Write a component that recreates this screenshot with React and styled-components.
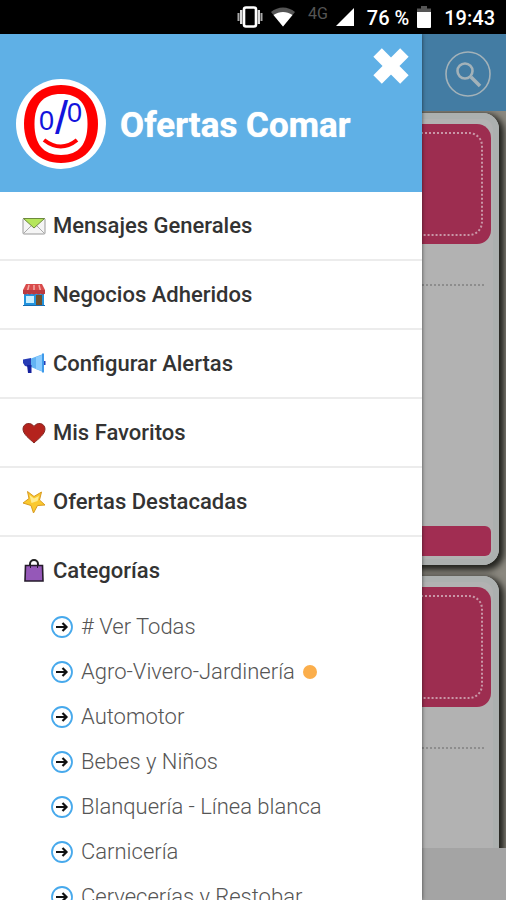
import React, { useState } from 'react';
import styled, { createGlobalStyle } from 'styled-components';

const categories = [
    { name: "# Ver Todas" },
    { name: "Agro-Vivero-Jardinería", isNew: true },
    { name: "Automotor" },
    { name: "Bebes y Niños" },
    { name: "Blanquería - Línea blanca" },
    { name: "Carnicería" },
    { name: "Cervecerías y Restobar" },
];

const VibrateIcon = () => (
    <svg width="26" height="22" viewBox="0 0 26 22" fill="none">
        <rect x="7" y="1.5" width="12" height="19" rx="2" stroke="#fff" strokeWidth="2.6" />
        <path d="M4.2 4v14M21.8 4v14" stroke="#ddd" strokeWidth="2.400" />
        <path d="M1.5 7v8M24.5 7v8" stroke="#aaa" strokeWidth="2" />
    </svg>
);

const WifiIcon = () => (
    <svg width="24" height="20" viewBox="0 0 24 20">
        <path d="M12 19.5L0 5C7 -1 17 -1 24 5z" fill="#555" />
        <path d="M12 19.5L2.500 8C8.500 4 15.500 4 21.500 8z" fill="#fff" />
    </svg>
);

const SignalIcon = () => (
    <svg width="18" height="18" viewBox="0 0 18 18">
        <path d="M0 18L18 0v18z" fill="#fff" />
    </svg>
);

const BatteryIcon = () => (
    <svg width="14" height="22" viewBox="0 0 14 22">
        <path d="M0 2.500h4V0h6v2.500h4V7H0z" fill="#555" />
        <path d="M0 6h14v15a1 1 0 0 1-1 1H1a1 1 0 0 1-1-1z" fill="#fff" />
    </svg>
);

const SearchIcon = () => (
    <svg width="46" height="46" viewBox="0 0 46 46" fill="none" stroke="#a3b2b9">
        <circle cx="23" cy="23" r="22" strokeWidth="1.600" />
        <circle cx="20" cy="20" r="7.500" strokeWidth="2.600" />
        <path d="M26 26l9 9" strokeWidth="3.600" />
    </svg>
);

const CloseIcon = () => (
    <svg width="36" height="36" viewBox="0 0 36 36" stroke="#fff" strokeWidth="12">
        <path d="M4.600 4.600l26.800 26.800M31.400 4.600l-26.800 26.800" />
    </svg>
);

const Logo = () => (
    <svg width="90" height="90" viewBox="0 0 90 90" role="img" aria-label="Comar">
        <circle cx="45" cy="45" r="45" fill="#fff" />
        <path
            d="M45 6C67 6 82 21 82 45S67 84 45 84 8 69 8 45 23 6 45 6z"
            fill="#f00"
        />
        <path
            d="M45 15C63 15 71.500 25 71.500 45S63 76 45 76 18.500 65 18.500 45 27 15 45 15z"
            fill="#fff"
        />
        <LogoText x="23" y="51" fontSize="27">0</LogoText>
        <LogoText x="39" y="55" fontSize="47">/</LogoText>
        <LogoText x="51" y="43" fontSize="27">0</LogoText>
        <path d="M28 61Q45 74 61 61" fill="none" stroke="#f00" strokeWidth="4" />
    </svg>
);

const MailIcon = () => (
    <svg width="24" height="24" viewBox="0 0 24 24">
        <rect x="1" y="4.500" width="22" height="15.500" rx="1" fill="#f5f5f5" stroke="#999" />
        <path d="M1.500 19.500l8-8M22.500 19.500l-8-8" stroke="#aaa" />
        <path d="M1.500 4.500h21L12 14z" fill="#b5e65b" stroke="#6d8a3c" />
    </svg>
);

const StoreIcon = () => (
    <svg width="24" height="24" viewBox="0 0 24 24">
        <rect x="2" y="9" width="20" height="14" fill="#2293dd" />
        <path d="M4 1h16l3 6v4H1V7z" fill="#d94b4b" />
        <path d="M7 2L5 10M12 2v8M17 2l2 8" stroke="#f5a9a5" strokeWidth="1.500" />
        <path d="M1 10q2 3 4.400 0 2.200 3 4.400 0 2.200 3 4.400 0 2.200 3 4.400 0 2.200 3 4.400 0V7H1z" fill="#b83a40" />
        <rect x="4" y="13" width="8" height="7" fill="#c9f0ff" />
        <rect x="14" y="12" width="6" height="11" fill="#70502c" />
        <path d="M1 22.500h22" stroke="#176bb0" />
    </svg>
);

const MegaphoneIcon = () => (
    <svg width="24" height="24" viewBox="0 0 24 24">
        <path d="M9 6.500L21 2v18L9 15z" fill="#62b3f3" />
        <path d="M14 5l6-2v16l-6-2z" fill="#8accff" />
        <path d="M21 1.500v19" stroke="#3f9aea" strokeWidth="2" />
        <path d="M1 7.500L9 6v9.500L3 14 1 11z" fill="#263bb5" />
        <path d="M5 13h4.500v8H6z" fill="#15209d" />
        <path d="M22 9h1.500v4H22z" fill="#263bb5" />
    </svg>
);

const HeartIcon = () => (
    <svg width="24" height="24" viewBox="0 0 24 24">
        <path
            d="M12 22C8 18 1 13.500 1 8c0-6 8-7.500 11-2.500C15 .500 23 2 23 8c0 5.500-7 10-11 14z"
            fill="#b4231d"
            stroke="#842b26"
        />
    </svg>
);

const StarIcon = () => (
    <svg width="24" height="24" viewBox="0 0 24 24">
        <path
            d="M5.500 1.500l6.500 5L19.500 2 17.500 10l5.500 5-7.500.500L11.500 23 9 15.500 1 13l6-4.500z"
            fill="#fbc92f"
            stroke="#d99b20"
            strokeLinejoin="round"
        />
        <path d="M7.500 5l4.500 3.500L17 6l-1.500 5-6 2z" fill="#ffec91" />
    </svg>
);

const BagIcon = () => (
    <svg width="24" height="24" viewBox="0 0 24 24">
        <path d="M8 8V5a4 4 0 0 1 8 0v3" fill="none" stroke="#222" strokeWidth="2" />
        <path d="M3.500 6.500h17l.500 15.500H3z" fill="#9558b8" stroke="#251b2b" strokeWidth="1.600" />
        <path d="M8.500 6V9M15.500 6v3" stroke="#251b2b" />
    </svg>
);

const ArrowIcon = () => (
    <svg width="22" height="22" viewBox="0 0 22 22" fill="none">
        <circle cx="11" cy="11" r="10" stroke="#47a9ec" strokeWidth="1.800" />
        <path d="M5 11h10M11.500 7l4 4-4 4" stroke="#111" strokeWidth="2.200" />
    </svg>
);

const menu = [
    { name: "Mensajes Generales", Icon: MailIcon },
    { name: "Negocios Adheridos", Icon: StoreIcon },
    { name: "Configurar Alertas", Icon: MegaphoneIcon },
    { name: "Mis Favoritos", Icon: HeartIcon },
    { name: "Ofertas Destacadas", Icon: StarIcon },
];

const OfferCard = () => (
    <Card>
        <Coupon>
            <CouponStitch />
        </Coupon>
        <CardDivider />
        <CardBody />
        <CardFooter />
    </Card>
);

const App = () => {
    const [menuOpen, setMenuOpen] = useState(true);
    const [showCategories, setShowCategories] = useState(true);

    const onClose = () => setMenuOpen(false);
    const onToggleCategories = () => setShowCategories((prev) => !prev);

    return (
        <>
            <GlobalStyle />
            <Screen>
                <StatusBar>
                    <VibrateIcon />
                    <WifiIcon />
                    <Network>4G</Network>
                    <SignalIcon />
                    <StatusText>76 %</StatusText>
                    <BatteryIcon />
                    <StatusText>19:43</StatusText>
                </StatusBar>
                <Content>
                    <TopBar>
                        <IconButton type="button" aria-label="Buscar">
                            <SearchIcon />
                        </IconButton>
                    </TopBar>
                    <Offers>
                        <OfferCard />
                        <OfferCard />
                    </Offers>
                    <BottomBar />
                    {menuOpen &&
                        <Drawer>
                            <DrawerHeader>
                                <Logo />
                                <Title>Ofertas Comar</Title>
                                <CloseButton type="button" aria-label="Cerrar" onClick={onClose}>
                                    <CloseIcon />
                                </CloseButton>
                            </DrawerHeader>
                            <nav>
                                {menu.map(({ name, Icon }) => (
                                    <MenuLink key={name} href="#">
                                        <Icon />
                                        {name}
                                    </MenuLink>
                                ))}
                                <MenuToggle
                                    type="button"
                                    aria-expanded={showCategories}
                                    onClick={onToggleCategories}
                                >
                                    <BagIcon />
                                    Categorías
                                </MenuToggle>
                                {showCategories &&
                                    <CategoryList>
                                        {categories.map(({ name, isNew }) => (
                                            <li key={name}>
                                                <CategoryLink href="#">
                                                    <ArrowIcon />
                                                    {name}
                                                    {isNew && <Dot />}
                                                </CategoryLink>
                                            </li>
                                        ))}
                                    </CategoryList>
                                }
                            </nav>
                        </Drawer>
                    }
                </Content>
            </Screen>
        </>
    );
}

export default App;

const GlobalStyle = createGlobalStyle`
* {
    box-sizing: border-box;
}
body {
    margin: 0;
    font-family: Roboto, "Liberation Sans", sans-serif;
}
svg {
    display: block;
    flex-shrink: 0;
}
`;

const Screen = styled.div`
display: flex;
flex-direction: column;
height: 100vh;
overflow: hidden;
`;

const StatusBar = styled.div`
display: flex;
align-items: center;
justify-content: flex-end;
gap: 8px;
height: 34px;
flex-shrink: 0;
padding: 0 11px;
background-color: #000;
color: #fff;
`;

const StatusText = styled.span`
font-size: 20px;
font-weight: 500;
white-space: nowrap;
padding: 2px 0 0 5px;
`;

const Network = styled.span`
align-self: flex-start;
padding: 4px 0 0 5px;
font-size: 16px;
line-height: 20px;
color: #555;
`;

const Content = styled.main`
position: relative;
display: flex;
flex-direction: column;
flex: 1;
min-height: 0;
`;

const TopBar = styled.header`
display: flex;
align-items: center;
justify-content: flex-end;
height: 77px;
flex-shrink: 0;
padding: 2px 15px 0;
background-color: #437ca3;
`;

const IconButton = styled.button`
padding: 0;
border: none;
background: none;
cursor: pointer;
`;

const Offers = styled.section`
flex: 1;
min-height: 0;
overflow: hidden;
padding: 2px 7px;
background-color: #8b887f;
`;

const Card = styled.article`
margin-bottom: 11px;
padding: 11px 8px 9px;
border-radius: 16px;
background-color: #b2b2b2;
box-shadow: 3px 3px 6px 2px #22221e, inset 0 0 0 6px #acb0af;
`;

const Coupon = styled.div`
height: 120px;
padding: 8px;
border-radius: 14px;
background-color: #9d2d50;
`;

const CouponStitch = styled.div`
height: 100%;
border: 2px dotted #c997a7;
border-radius: 14px;
`;

const CardDivider = styled.div`
margin: 40px 7px 0;
border-top: 2px dotted #8d8d8d;
`;

const CardBody = styled.div`
min-height: 240px;
`;

const CardFooter = styled.div`
height: 30px;
border-radius: 6px;
background-color: #a12d52;
`;

const BottomBar = styled.footer`
height: 52px;
flex-shrink: 0;
background-color: #a4a4a4;
`;

const Drawer = styled.aside`
position: absolute;
top: 0;
bottom: 0;
left: 0;
width: calc(100% - 84px);
overflow: hidden;
background-color: #fff;
box-shadow: 0 0 4px rgba(0, 0, 0, 0.6);
`;

const DrawerHeader = styled.div`
position: relative;
display: flex;
align-items: center;
gap: 14px;
height: 158px;
padding: 22px 16px 0;
background-color: #5fb0e6;
`;

const Title = styled.h1`
margin: 0;
padding-top: 2px;
font-size: 35px;
font-weight: 700;
color: #fff;
text-shadow: 0 0 1px #fff;
white-space: nowrap;
`;

const CloseButton = styled(IconButton)`
position: absolute;
top: 14px;
right: 13px;
`;

const MenuLink = styled.a`
display: flex;
align-items: center;
gap: 7px;
width: 100%;
height: 69px;
padding: 0 22px;
border-bottom: 2px solid #ececec;
font-size: 22px;
font-weight: 500;
color: #333;
text-decoration: none;
`;

const MenuToggle = styled(MenuLink).attrs({ as: 'button' })`
height: 67px;
border: none;
background: none;
font-family: inherit;
cursor: pointer;
`;

const CategoryList = styled.ul`
margin: 0;
padding: 0 0 0 51px;
list-style: none;
`;

const CategoryLink = styled.a`
display: flex;
align-items: center;
gap: 8px;
height: 45px;
font-size: 22px;
font-weight: 300;
color: #555;
text-decoration: none;
`;

const Dot = styled.span`
width: 14px;
height: 14px;
border-radius: 50%;
background-color: #fbae4b;
`;

const LogoText = styled.text`
font-family: "Liberation Sans", sans-serif;
fill: #1414dc;
`;
